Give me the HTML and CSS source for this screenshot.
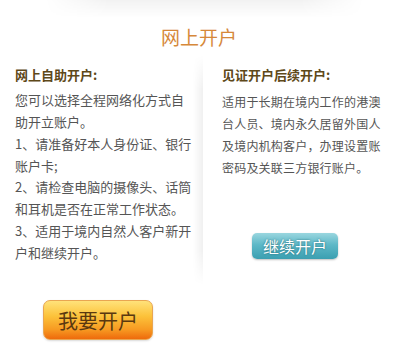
FILE: index.html
```html
<!DOCTYPE html>
<html lang="zh-CN">
<head>
<meta charset="utf-8">
<title>网上开户</title>
<link rel="stylesheet" href="styles.css">
</head>
<body>
<div class="page">
  <div class="topshade"></div>
  <h1 class="title">网上开户</h1>
  <div class="cols">
    <div class="col left">
      <h2 class="heading">网上自助开户:</h2>
      <p class="text">您可以选择全程网络化方式自<br>助开立账户。<br>1、请准备好本人身份证、银行<br>账户卡;<br>2、请检查电脑的摄像头、话筒<br>和耳机是否在正常工作状态。<br>3、适用于境内自然人客户新开<br>户和继续开户。</p>
    </div>
    <div class="divider"></div>
    <div class="col right">
      <h2 class="heading">见证开户后续开户:</h2>
      <p class="text">适用于长期在境内工作的港澳<br>台人员、境内永久居留外国人<br>及境内机构客户，办理设置账<br>密码及关联三方银行账户。</p>
      <a class="btn-teal" href="#">继续开户</a>
    </div>
  </div>
  <div class="bottom">
    <a class="btn-orange" href="#">我要开户</a>
  </div>
</div>
</body>
</html>
```

FILE: styles.css
```css
html, body {
  margin: 0;
  padding: 0;
  background: #fff;
}
.page {
  width: 394px;
  height: 358px;
  font-family: "Noto Sans CJK SC", "Liberation Sans", sans-serif;
  overflow: hidden;
}
.topshade {
  height: 18px;
  margin: 0 30px 0 45px;
  background: linear-gradient(to bottom, rgba(0,0,0,0.05), rgba(0,0,0,0));
  -webkit-mask-image: linear-gradient(to right, transparent, #000 20%, #000 80%, transparent);
  mask-image: linear-gradient(to right, transparent, #000 20%, #000 80%, transparent);
}
.title {
  margin: 7px 0 0 0;
  padding-left: 4px;
  text-align: center;
  font-size: 19px;
  line-height: 24px;
  font-weight: normal;
  color: #d6883a;
}
.cols {
  display: flex;
  height: 230px;
  margin-top: 6px;
}
.col {
  padding-top: 10px;
}
.left {
  width: 178px;
  padding-left: 15px;
}
.right {
  flex: 1;
  padding-left: 19px;
}
.heading {
  margin: 0;
  font-size: 13px;
  line-height: 20px;
  font-weight: bold;
  color: #5e4819;
  white-space: nowrap;
}
.text {
  margin: 0;
  color: #555;
  white-space: nowrap;
}
.left .text {
  margin-top: 4px;
  font-size: 13px;
  line-height: 21.85px;
}
.right .text {
  margin-top: 6px;
  font-size: 12px;
  letter-spacing: 0.2px;
  line-height: 22px;
}
.divider {
  width: 10px;
  background: linear-gradient(to right, rgba(0,0,0,0), rgba(0,0,0,0.06));
  -webkit-mask-image: linear-gradient(to bottom, transparent, #000 15%, #000 85%, transparent);
  mask-image: linear-gradient(to bottom, transparent, #000 15%, #000 85%, transparent);
}
.btn-teal {
  display: flex;
  align-items: center;
  justify-content: center;
  width: 86px;
  height: 26px;
  margin: 54px 0 0 30px;
  border-radius: 5px;
  background: linear-gradient(to bottom, #9ad6df 0%, #5db8c7 45%, #3b9fb1 100%);
  box-shadow: 0 1px 2px rgba(0,0,0,0.25);
  color: #fff;
  font-size: 16px;
  text-decoration: none;
  text-shadow: 0 0 2px rgba(20,80,90,0.8);
}
.bottom {
  padding: 15px 0 0 43px;
}
.btn-orange {
  display: flex;
  align-items: center;
  justify-content: center;
  width: 108px;
  height: 38px;
  border: 1px solid #e9a651;
  border-radius: 7px;
  background: linear-gradient(to bottom, #ffe27a 0%, #fcc23a 40%, #f79a22 75%, #ee6a0c 100%);
  box-shadow: 0 1px 2px rgba(0,0,0,0.15);
  color: #5a3810;
  font-size: 20px;
  text-decoration: none;
}
```
